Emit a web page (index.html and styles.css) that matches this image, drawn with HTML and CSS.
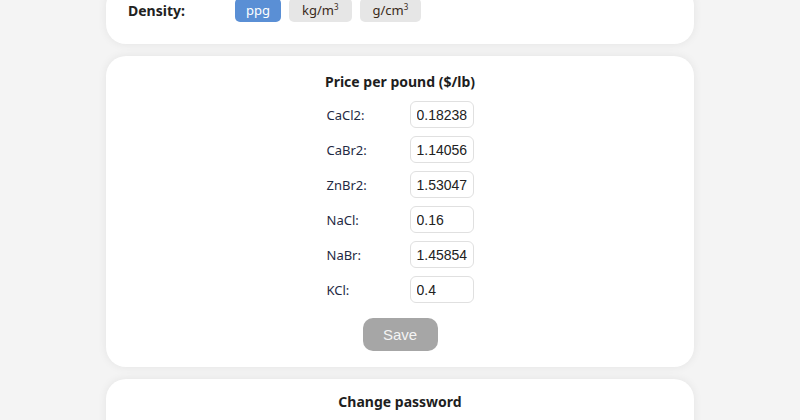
FILE: index.html
```html
<!DOCTYPE html>
<html lang="en">
<head>
<meta charset="UTF-8">
<meta name="viewport" content="width=device-width, initial-scale=1.0">
<title>Settings</title>
<link rel="stylesheet" href="styles.css">
</head>
<body>

<div class="page">
    <section class="card units">
        <div class="unit-row">
            <div class="unit-label">Density:</div>
            <div class="unit-options">
                <button type="button" class="unit active">ppg</button>
                <button type="button" class="unit">kg/m<sup>3</sup></button>
                <button type="button" class="unit">g/cm<sup>3</sup></button>
            </div>
        </div>
    </section>

    <section class="card prices">
        <h2>Price per pound ($/lb)</h2>
        <div class="price-grid">
            <label for="cacl2">CaCl2:</label>
            <input id="cacl2" type="text" value="0.18238">
            <label for="cabr2">CaBr2:</label>
            <input id="cabr2" type="text" value="1.14056">
            <label for="znbr2">ZnBr2:</label>
            <input id="znbr2" type="text" value="1.53047">
            <label for="nacl">NaCl:</label>
            <input id="nacl" type="text" value="0.16">
            <label for="nabr">NaBr:</label>
            <input id="nabr" type="text" value="1.45854">
            <label for="kcl">KCl:</label>
            <input id="kcl" type="text" value="0.4">
        </div>
        <button type="button" class="save" disabled>Save</button>
    </section>

    <section class="card password">
        <h2>Change password</h2>
    </section>
</div>

</body>
</html>
```

FILE: styles.css
```css
body {
    font-family: "Noto Sans", "Open Sans", sans-serif;
    background-color: #f4f4f4;
    margin: 0;
    padding: 0;
    color: #222;
    overflow: hidden;
}
.page {
    width: 588px;
    margin: -14px auto 0;
    display: flex;
    flex-direction: column;
    gap: 12px;
}
.card {
    background-color: #fff;
    border-radius: 20px;
    box-shadow: 0 0 10px rgba(0,0,0,0.07);
}
.card h2 {
    margin: 0;
    font-size: 14px;
    font-weight: 700;
    text-align: center;
    color: #1e1e1e;
}
.units {
    padding: 12px 22px 22px;
}
.unit-row {
    display: flex;
    align-items: center;
}
.unit-label {
    width: 107px;
    font-size: 14px;
    font-weight: 700;
    color: #222;
}
.unit-options {
    display: flex;
    gap: 8px;
}
.unit {
    font-family: "Noto Sans", sans-serif;
    font-size: 13px;
    height: 24px;
    padding: 0 13px;
    border: none;
    border-radius: 5px;
    background-color: #e6e6e6;
    color: #3a2a1a;
}
.unit sup {
    font-size: 8px;
}
.unit.active {
    background-color: #5a8fd5;
    color: #fff;
    padding: 0 11px;
}
.prices {
    padding: 16px 0 16px;
    display: flex;
    flex-direction: column;
    align-items: center;
}
.price-grid {
    display: grid;
    grid-template-columns: 83px 64px;
    row-gap: 8px;
    align-items: center;
    margin: 10px 0 0 0;
}
.price-grid label {
    font-size: 13px;
    color: #1f2a44;
}
.price-grid input {
    box-sizing: border-box;
    width: 64px;
    height: 27px;
    border: 1px solid #e0e0e0;
    border-radius: 6px;
    padding: 0 4px 0 6px;
    font-family: "Liberation Sans", Arial, sans-serif;
    font-size: 14px;
    color: #222;
    outline: none;
}
.save {
    margin-top: 15px;
    width: 75px;
    height: 33px;
    border: none;
    border-radius: 10px;
    background-color: #a6a6a6;
    color: #f4f4f4;
    font-family: "Liberation Sans", Arial, sans-serif;
    font-size: 15px;
}
.password {
    padding: 13px 0 40px;
}
```
